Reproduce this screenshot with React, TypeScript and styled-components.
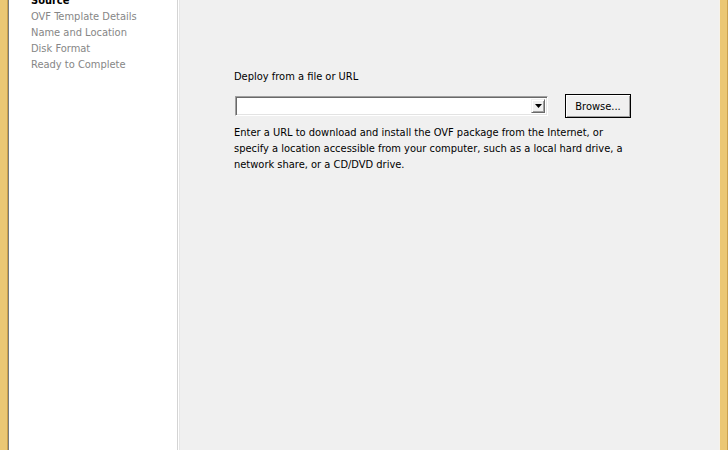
import React from "react";
import styled, { createGlobalStyle } from "styled-components";

const Global = createGlobalStyle`
  html, body { margin: 0; padding: 0; }
  body {
    width: 728px;
    height: 450px;
    overflow: hidden;
    font-family: "DejaVu Sans Condensed", "DejaVu Sans", sans-serif;
    font-size: 11px;
    color: #000;
  }
`;

const Window = styled.div`
  display: flex;
  width: 728px;
  height: 450px;
  overflow: hidden;
`;

const FrameLeft = styled.div`
  width: 7px;
  flex: none;
  background: #ebc774;
  border-right: 1px solid #c9a04e;
`;

const FrameRight = styled.div`
  width: 7px;
  flex: none;
  background: #ebc774;
  border-left: 1px solid #f6f2ea;
  border-right: 1px solid #c9a04e;
`;

const Sidebar = styled.nav`
  flex: none;
  width: 170px;
  box-sizing: border-box;
  background: #ffffff;
  border-left: 1px solid #7a7a7a;
  border-right: 1px solid #d4d4d4;
  display: flex;
  flex-direction: column;
  padding-left: 22px;
`;

const StepList = styled.ul`
  list-style: none;
  margin: -7px 0 0 0;
  padding: 0;
`;

const Step = styled.li<{ $active?: boolean }>`
  height: 16px;
  line-height: 16px;
  white-space: nowrap;
  font-weight: ${(p) => (p.$active ? "bold" : "normal")};
  color: ${(p) => (p.$active ? "#000000" : "#868686")};
`;

const Main = styled.main`
  flex: 1;
  background: #f0f0f0;
  border-left: 1px solid #ffffff;
  box-shadow: inset 1px 0 0 #e6e6e6;
  padding: 69px 0 0 55px;
  box-sizing: border-box;
  display: flex;
  flex-direction: column;
`;

const Label = styled.div`
  height: 16px;
  line-height: 16px;
`;

const InputRow = styled.div`
  display: flex;
  align-items: center;
  margin-top: 9px;
  gap: 17px;
  margin-left: 1px;
`;

const Combo = styled.div`
  width: 313px;
  height: 20px;
  box-sizing: border-box;
  background: #ffffff;
  border-top: 1px solid #a0a0a0;
  border-left: 1px solid #a0a0a0;
  border-bottom: 1px solid #ffffff;
  border-right: 1px solid #ffffff;
  box-shadow: inset 1px 1px 0 #696969, inset -1px -1px 0 #e3e3e3;
  display: flex;
  justify-content: flex-end;
  align-items: stretch;
  padding: 2px;
`;

const ComboButton = styled.div`
  width: 14px;
  box-sizing: border-box;
  background: #f0f0f0;
  border-top: 1px solid #f0f0f0;
  border-left: 1px solid #f0f0f0;
  border-right: 1px solid #696969;
  border-bottom: 1px solid #696969;
  box-shadow: inset 1px 1px 0 #ffffff, inset -1px -1px 0 #a0a0a0;
  display: flex;
  align-items: center;
  justify-content: center;
`;

const Button = styled.button`
  width: 66px;
  height: 24px;
  box-sizing: border-box;
  background: #f0f0f0;
  border: 1px solid #000000;
  box-shadow: inset 1px 1px 0 #ffffff, inset -1px -1px 0 #a0a0a0;
  font: inherit;
  color: #000;
  padding: 0;
`;

const Description = styled.p`
  margin: 7px 0 0 0;
  line-height: 16px;
  white-space: nowrap;
`;

export default function App() {
  return (
    <>
      <Global />
      <Window>
        <FrameLeft />
        <Sidebar>
          <StepList>
            <Step $active>Source</Step>
            <Step>OVF Template Details</Step>
            <Step>Name and Location</Step>
            <Step>Disk Format</Step>
            <Step>Ready to Complete</Step>
          </StepList>
        </Sidebar>
        <Main>
          <Label>Deploy from a file or URL</Label>
          <InputRow>
            <Combo>
              <ComboButton>
                <svg width="7" height="4" viewBox="0 0 7 4">
                  <path d="M0 0h7L3.5 4z" fill="#000" />
                </svg>
              </ComboButton>
            </Combo>
            <Button>Browse...</Button>
          </InputRow>
          <Description>
            Enter a URL to download and install the OVF package from the Internet, or
            <br />
            specify a location accessible from your computer, such as a local hard drive, a
            <br />
            network share, or a CD/DVD drive.
          </Description>
        </Main>
        <FrameRight />
      </Window>
    </>
  );
}
